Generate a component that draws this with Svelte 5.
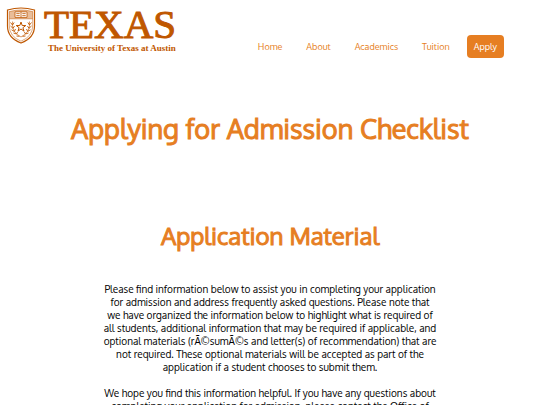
<script lang="ts">
	const links = ['Home', 'About', 'Academics', 'Tuition'];
</script>

<header class="site-header">
	<a class="logo" href="#home" aria-label="The University of Texas at Austin">
		<svg class="shield" viewBox="0 0 29 37" aria-hidden="true">
			<path d="M1 3 Q8 1 14.5 1 Q21 1 28 3 V19 Q28 31 14.5 36 Q1 31 1 19 Z" fill="#fff" stroke="#bf5700" stroke-width="1.2" />
			<path d="M2.8 4.6 Q14.5 1.4 26.2 4.6 V11.8 H2.8 Z" fill="#e9bd99" stroke="#bf5700" stroke-width="0.5" />
			<path d="M8.5 4.8 H20.5 V10.4 H8.5 Z" fill="#fff" stroke="#bf5700" stroke-width="0.8" />
			<path d="M14.5 4.8 V10.4 M9.8 6.6 H13.2 M9.8 8.6 H13.2 M15.8 6.6 H19.2 M15.8 8.6 H19.2" fill="none" stroke="#bf5700" stroke-width="0.8" />
			<path d="M2.8 11.8 V19 Q3 29.5 14.5 34.2 Q26 29.5 26.2 19 V11.8" fill="none" stroke="#bf5700" stroke-width="0.5" />
			<path d="M14.5 15 L15.7 18.5 H19.3 L16.4 20.7 L17.5 24.1 L14.5 22 L11.5 24.1 L12.6 20.7 L9.7 18.5 H13.3 Z" fill="#fff" stroke="#bf5700" stroke-width="1" />
			{#each ['', 'translate(29 0) scale(-1 1)'] as side}
				<g transform={side} fill="none" stroke="#bf5700" stroke-width="0.9">
					<path d="M6 14.5 Q4.5 25 14.5 30" stroke-width="0.6" />
					<path d="M4 15.5 L6 18 M4 19 L6.5 21.3 M5 22.8 L7.8 24.4 M7 26 L10 27 M10 29 L13 29.3 M7.6 15.5 L6 18 M8 19 L6.5 21.3 M9 22 L7.8 24.4 M11.2 24.8 L10 27" />
				</g>
			{/each}
		</svg>
		<span class="wordmark">
			<span class="name">TEXAS</span>
			<span class="campus">The University of Texas at Austin</span>
		</span>
	</a>
	<nav>
		{#each links as link}
			<a href="#{link.toLowerCase()}">{link}</a>
		{/each}
		<a class="apply" href="#apply">Apply</a>
	</nav>
</header>

<main>
	<h1>Applying for Admission Checklist</h1>
	<section>
		<h2>Application Material</h2>
		<p>
			Please find information below to assist you in completing your application<br />
			for admission and address frequently asked questions. Please note that<br />
			we have organized the information below to highlight what is required of<br />
			all students, additional information that may be required if applicable, and<br />
			optional materials (rÃ©sumÃ©s and letter(s) of recommendation) that are<br />
			not required. These optional materials will be accepted as part of the<br />
			application if a student chooses to submit them.
		</p>
		<p>
			We hope you find this information helpful. If you have any questions about<br />
			completing your application for admission, please contact the Office of
		</p>
	</section>
</main>

<style>
	:global(body) {
		margin: 0;
		background: #fff;
	}

	.site-header {
		display: flex;
		justify-content: space-between;
		align-items: flex-start;
		padding: 7px 36px 0 6px;
		font-family: Oxygen, 'Noto Sans', sans-serif;
	}

	.logo {
		display: flex;
		gap: 8px;
		color: #bf5700;
		text-decoration: none;
	}

	.shield {
		width: 30px;
		height: 37px;
	}

	.wordmark {
		display: flex;
		flex-direction: column;
		font-family: 'Liberation Serif', serif;
		white-space: nowrap;
	}

	.name {
		font-size: 41px;
		line-height: 34px;
		-webkit-text-stroke: 1px #bf5700;
	}

	.campus {
		padding-left: 4px;
		font-size: 9px;
		line-height: 14px;
		font-weight: bold;
	}

	nav {
		display: flex;
		align-items: center;
		gap: 10px;
		padding-top: 28px;
	}

	nav a {
		padding: 0 7px;
		border-radius: 4px;
		font-size: 9px;
		line-height: 23px;
		color: #e67e22;
		text-decoration: none;
	}

	nav .apply {
		background: #e67e22;
		color: #fff;
	}

	main {
		font-family: Oxygen, 'Noto Sans', sans-serif;
		text-align: center;
	}

	h1,
	h2 {
		margin: 0;
		color: #e67e22;
		font-weight: 400;
		-webkit-text-stroke: 1px #e67e22;
	}

	h1 {
		padding-top: 50px;
		font-size: 27px;
		line-height: 40px;
	}

	h2 {
		padding-top: 71px;
		padding-bottom: 30px;
		font-size: 24px;
		line-height: 34px;
	}

	p {
		margin: 0 0 13px;
		font-size: 10px;
		line-height: 13px;
		color: #000;
	}
</style>
